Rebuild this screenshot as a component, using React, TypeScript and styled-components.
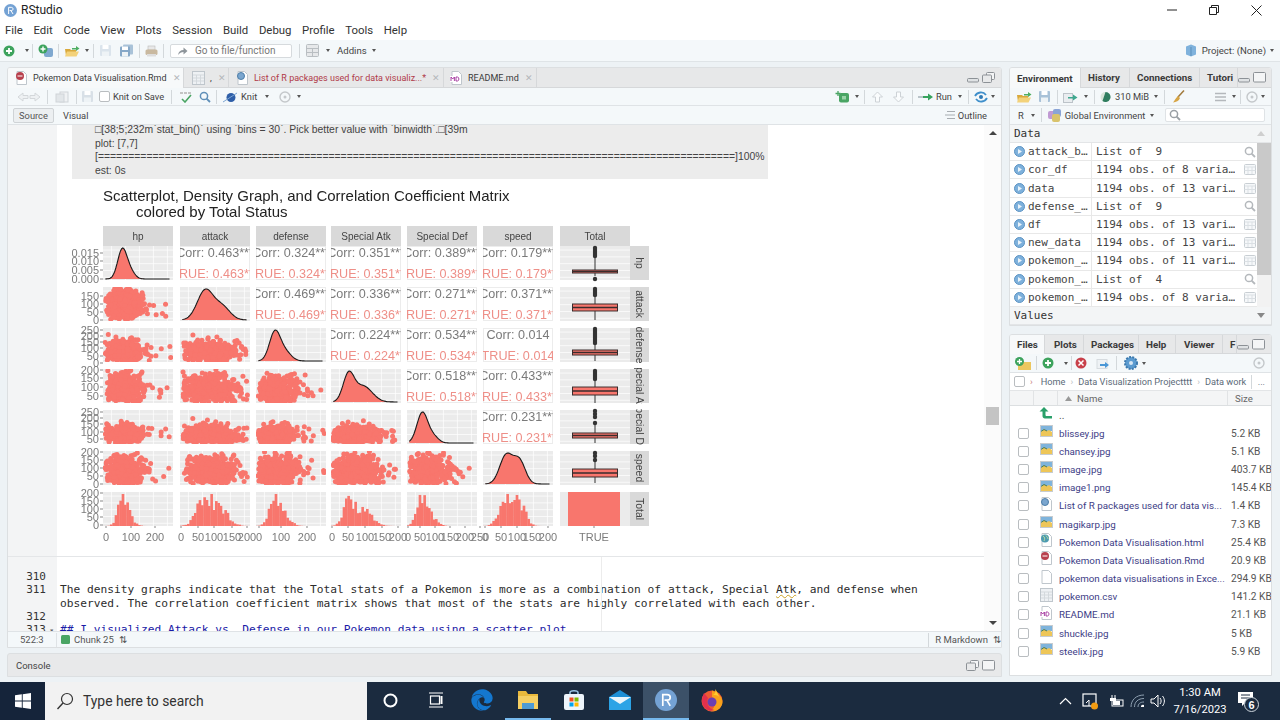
import React from 'react';
import styled, { createGlobalStyle } from 'styled-components';
import { FaEdge } from 'react-icons/fa';

const UI = `Roboto, "Open Sans", sans-serif`;
const MONO = `"DejaVu Sans Mono", "Liberation Mono", monospace`;
const ARIAL = `"Liberation Sans", Arial, sans-serif`;

const GlobalStyle = createGlobalStyle`
  html, body { margin: 0; padding: 0; background: #fff; }
  body { width: 1280px; height: 720px; overflow: hidden; font-family: ${UI}; }
`;

const Win = styled.div`
  width: 1280px;
  height: 720px;
  display: flex;
  flex-direction: column;
  overflow: hidden;
`;

const TitleBar = styled.div`
  height: 20px;
  display: flex;
  align-items: center;
  padding-left: 4px;
  background: #fff;
  font-size: 12px;
  color: #222;
`;
const TitleText = styled.span`
  margin-left: 4px;
`;
const WinControls = styled.div`
  margin-left: auto;
  display: flex;
  align-items: center;
  gap: 32px;
  padding-right: 18px;
`;

const MenuBar = styled.div`
  height: 20px;
  display: flex;
  align-items: center;
  gap: 10.6px;
  padding-left: 5px;
  background: #fff;
  font-size: 11.4px;
  color: #333;
`;

const MainToolbar = styled.div`
  height: 21px;
  display: flex;
  align-items: center;
  padding: 0 6px 0 3px;
  background: #f4f8fa;
  border-bottom: 1px solid #dfe4e7;
  font-size: 9.6px;
  color: #444;
`;

const Slot = styled.span<{ $ml?: number; $pushRight?: boolean }>`
  display: inline-flex;
  align-items: center;
  flex: none;
  margin-left: ${(p) => (p.$pushRight ? 'auto' : `${p.$ml ?? 0}px`)};
`;

const Sep = styled.span<{ $ml: number }>`
  width: 1px;
  height: 14px;
  flex: none;
  margin-left: ${(p) => p.$ml}px;
  background: #d3d8db;
`;

const Caret = styled.span<{ $ml: number }>`
  width: 0;
  height: 0;
  flex: none;
  margin-left: ${(p) => p.$ml}px;
  border-left: 2.5px solid transparent;
  border-right: 2.5px solid transparent;
  border-top: 3px solid #555;
`;

const GoToBox = styled.div`
  width: 122px;
  height: 14px;
  margin-left: 6px;
  display: flex;
  align-items: center;
  gap: 7px;
  padding-left: 6px;
  box-sizing: border-box;
  background: #fff;
  border: 1px solid #d6dadd;
  border-radius: 2px;
  color: #777;
  font-size: 10px;
`;

const Workspace = styled.div`
  height: 620px;
  box-sizing: border-box;
  padding: 5px 8px 5px 7px;
  display: grid;
  grid-template-columns: 995px 263px;
  column-gap: 7px;
  background: #edf2f5;
`;

const Column = styled.div<{ $gap: number }>`
  display: flex;
  flex-direction: column;
  gap: ${(p) => p.$gap}px;
  min-height: 0;
`;

const Pane = styled.div<{ $h: number }>`
  height: ${(p) => p.$h}px;
  flex: none;
  display: flex;
  flex-direction: column;
  box-sizing: border-box;
  overflow: hidden;
  background: #fff;
  border: 1px solid #dcdfe1;
  border-radius: 3px 3px 0 0;
`;

const TabStrip = styled.div<{ $h?: number }>`
  height: ${(p) => p.$h ?? 19}px;
  flex: none;
  display: flex;
  align-items: stretch;
  background: #e7e8e9;
  border-bottom: 1px solid #d6d8da;
`;

const Tab = styled.div<{ $w: number; $active?: boolean; $red?: boolean; $bold?: boolean; $pl?: number }>`
  width: ${(p) => p.$w}px;
  flex: none;
  box-sizing: border-box;
  display: flex;
  align-items: center;
  padding-left: ${(p) => p.$pl ?? 7}px;
  gap: 5px;
  white-space: nowrap;
  overflow: hidden;
  font-size: ${(p) => (p.$bold ? 9.8 : 9)}px;
  font-weight: ${(p) => (p.$bold ? 700 : 400)};
  color: ${(p) => (p.$red ? '#b03a48' : '#3a3a3a')};
  background: ${(p) => (p.$active ? '#f7f9fa' : 'transparent')};
  border-right: 1px solid #d6d8da;
  margin-bottom: ${(p) => (p.$active ? '-1px' : '0')};
`;

const TabClose = styled.span`
  color: #b4b7ba;
  font-size: 9px;
  margin-left: 1px;
`;

const PaneControls = styled.div`
  margin-left: auto;
  display: flex;
  align-items: center;
  padding-right: 6px;
  gap: 3px;
`;

const ToolRow = styled.div<{ $h: number; $pl?: number }>`
  height: ${(p) => p.$h}px;
  flex: none;
  box-sizing: border-box;
  display: flex;
  align-items: center;
  padding: 0 6px 0 ${(p) => p.$pl ?? 0}px;
  background: #f4f8fa;
  border-bottom: 1px solid #dfe3e6;
  font-size: 9.3px;
  color: #444;
  white-space: nowrap;
`;

const CheckBox = styled.span<{ $ml?: number; $size?: number }>`
  width: ${(p) => p.$size ?? 9}px;
  height: ${(p) => p.$size ?? 9}px;
  flex: none;
  margin-left: ${(p) => p.$ml ?? 0}px;
  background: #fff;
  border: 1px solid #b9bdc0;
  border-radius: 2px;
`;

const SourceButton = styled.div`
  width: 39px;
  height: 13px;
  margin-left: 5px;
  display: flex;
  align-items: center;
  justify-content: center;
  background: #eceff1;
  border: 1px solid #cfd3d6;
  border-radius: 2px;
  font-size: 9.3px;
  color: #555;
`;

const EditorBody = styled.div`
  flex: 1;
  min-height: 0;
  display: flex;
  overflow: hidden;
  background: #fff;
`;

const EditorMain = styled.div`
  flex: 1;
  min-width: 0;
  display: flex;
  flex-direction: column;
`;

const OutputRow = styled.div`
  height: 432px;
  flex: none;
  display: grid;
  grid-template-columns: 49px 1fr;
  border-bottom: 1px solid #e4e6e8;
  box-sizing: border-box;
`;

const Gutter = styled.div`
  background: #f3f4f5;
  box-sizing: border-box;
  padding-right: 11px;
  text-align: right;
  font-family: ${MONO};
  font-size: 11px;
  line-height: 13.3px;
  color: #333;
`;

const FoldMark = styled.span`
  display: inline-block;
  width: 7px;
  margin-right: -8px;
  margin-left: 1px;
  font-size: 8px;
  color: #666;
`;

const OutputBody = styled.div`
  display: flex;
  flex-direction: column;
  padding-left: 15px;
  overflow: hidden;
`;

const ChunkLog = styled.div`
  width: 696px;
  height: 56px;
  flex: none;
  margin-top: -2px;
  box-sizing: border-box;
  padding-left: 23px;
  background: #ececec;
  font-family: ${ARIAL};
  font-size: 10.4px;
  line-height: 13.6px;
  color: #444;
  white-space: nowrap;
  overflow: hidden;
`;

const CodeArea = styled.div`
  position: relative;
  flex: 1;
  min-height: 0;
  overflow: hidden;
  &::after {
    content: '';
    position: absolute;
    top: 0;
    bottom: 0;
    left: 593px;
    width: 1px;
    background: #ececec;
  }
`;

const CodeRow = styled.div<{ $h: number }>`
  height: ${(p) => p.$h}px;
  display: grid;
  grid-template-columns: 49px 1fr;
`;

const CodeText = styled.div<{ $blue?: boolean }>`
  padding-left: 3px;
  font-family: ${MONO};
  font-size: 11.23px;
  line-height: 13.3px;
  white-space: pre;
  color: ${(p) => (p.$blue ? '#1a1aa6' : '#2c2c2c')};
`;

const Squiggle = styled.span`
  text-decoration: underline wavy #c9a227 1px;
`;

const VScroll = styled.div`
  width: 17px;
  flex: none;
  display: flex;
  flex-direction: column;
  align-items: center;
  background: #fbfbfb;
  padding: 6px 0;
  box-sizing: border-box;
`;

const ArrowUp = styled.span`
  border-left: 4px solid transparent;
  border-right: 4px solid transparent;
  border-bottom: 4px solid #444;
`;

const ArrowDown = styled.span`
  margin-top: auto;
  border-left: 4px solid transparent;
  border-right: 4px solid transparent;
  border-top: 4px solid #444;
`;

const ScrollThumb = styled.div`
  width: 13px;
  height: 18px;
  margin-top: 272px;
  background: #c4c4c4;
`;

const StatusBar = styled.div`
  height: 15px;
  flex: none;
  display: flex;
  align-items: center;
  background: #f4f8fa;
  border-top: 1px solid #dfe3e6;
  font-size: 9.5px;
  color: #555;
  white-space: nowrap;
`;

const StatusCell = styled.span<{ $w: number }>`
  width: ${(p) => p.$w}px;
  flex: none;
  box-sizing: border-box;
  padding-left: 12px;
  border-right: 1px solid #dfe3e6;
  line-height: 14px;
`;

const ConsoleBar = styled.div`
  height: 24px;
  flex: none;
  box-sizing: border-box;
  display: flex;
  align-items: center;
  padding: 0 0 0 8px;
  background: #e8e9ea;
  border: 1px solid #dcdfe1;
  border-radius: 3px 3px 0 0;
  font-size: 9.5px;
  color: #444;
`;

const ListWrap = styled.div`
  flex: 1;
  min-height: 0;
  display: flex;
`;

const SectionHead = styled.div`
  height: 18px;
  flex: none;
  display: flex;
  align-items: center;
  justify-content: space-between;
  padding: 0 6px 0 4px;
  box-sizing: border-box;
  background: #f3f5f6;
  font-family: ${MONO};
  font-size: 11px;
  color: #333;
  border-bottom: 1px solid #e3e5e7;
`;

const EnvList = styled.div`
  flex: 1;
  min-width: 0;
  display: flex;
  flex-direction: column;
`;

const EnvRow = styled.div`
  flex: 1;
  display: grid;
  grid-template-columns: 82px 1fr 22px;
  align-items: center;
  font-family: ${MONO};
  font-size: 11px;
  color: #444;
  white-space: pre;
  border-bottom: 1px solid #e8e8e8;
`;

const EnvName = styled.div`
  height: 100%;
  display: flex;
  align-items: center;
  gap: 3px;
  padding-left: 4px;
  overflow: hidden;
  border-right: 1px solid #e8e8e8;
`;

const EnvValue = styled.div`
  padding-left: 4px;
  overflow: hidden;
`;

const EnvAction = styled.div`
  padding-left: 9px;
`;

const EnvScroll = styled.div`
  width: 14px;
  flex: none;
  background: #f2f2f2;
`;

const EnvThumb = styled.div`
  height: 132px;
  background: #c9c9c9;
`;

const SearchBox = styled.div`
  width: 102px;
  height: 14px;
  margin-left: 11px;
  display: flex;
  align-items: center;
  padding-left: 3px;
  box-sizing: border-box;
  background: #fff;
  border: 1px solid #dfe3e6;
  border-radius: 2px;
`;

const PathBar = styled.div`
  height: 18px;
  flex: none;
  display: flex;
  align-items: center;
  box-sizing: border-box;
  padding-left: 4px;
  font-size: 9.2px;
  color: #5b6a78;
  white-space: nowrap;
  border-bottom: 1px solid #e3e5e7;
`;

const PathChevron = styled.span<{ $red?: boolean }>`
  margin: 0 5px;
  color: ${(p) => (p.$red ? '#c77b7b' : '#b9bdc0')};
`;

const FileHead = styled.div`
  height: 15px;
  flex: none;
  box-sizing: border-box;
  display: grid;
  grid-template-columns: 24px 24px 170px 1fr;
  background: #f4f5f6;
  font-size: 9.6px;
  color: #666;
  border-bottom: 1px solid #dcdfe1;
`;

const HeadCell = styled.div`
  display: flex;
  align-items: center;
  gap: 5px;
  padding-left: 7px;
  border-right: 1px solid #e1e3e5;
  &:last-child {
    border-right: 0;
  }
`;

const FileRow = styled.div`
  height: 18.2px;
  display: grid;
  grid-template-columns: 24px 24px 170px 1fr;
  align-items: center;
  font-size: 9.8px;
  white-space: nowrap;
`;

const FileCheck = styled.div`
  display: flex;
  justify-content: center;
  padding-left: 2px;
`;

const FileIconCell = styled.div`
  display: flex;
  justify-content: center;
  padding-bottom: 4px;
`;

const FileName = styled.div<{ $muted?: boolean }>`
  padding-left: 1px;
  overflow: hidden;
  color: ${(p) => (p.$muted ? '#555' : '#3d3d86')};
`;

const FileSize = styled.div`
  padding-left: 3px;
  font-size: 10.2px;
  color: #555;
`;

const UpRow = styled.div`
  height: 18px;
  display: grid;
  grid-template-columns: 24px 24px 1fr;
  align-items: center;
  font-size: 10.2px;
  color: #555;
`;

const Taskbar = styled.div`
  height: 38px;
  flex: none;
  display: flex;
  align-items: stretch;
  background: #1b2b3f;
  color: #fff;
`;

const StartButton = styled.div`
  width: 45px;
  display: flex;
  align-items: center;
  justify-content: center;
  background: #15243a;
`;

const SearchField = styled.div`
  width: 322px;
  display: flex;
  align-items: center;
  gap: 9px;
  padding-left: 11px;
  box-sizing: border-box;
  background: #f2f2f2;
  color: #333;
  font-size: 13.9px;
`;

const TaskIcon = styled.div<{ $w: number; $active?: boolean; $open?: boolean }>`
  width: ${(p) => p.$w}px;
  flex: none;
  box-sizing: border-box;
  display: flex;
  align-items: center;
  justify-content: center;
  background: ${(p) => (p.$active ? '#3c5168' : 'transparent')};
  border-bottom: 2px solid ${(p) => (p.$active || p.$open ? '#76b9ed' : 'transparent')};
`;

const Tray = styled.div`
  margin-left: auto;
  display: flex;
  align-items: center;
  padding-right: 21px;
`;

const Clock = styled.div`
  margin-left: 5px;
  width: 58px;
  text-align: center;
  font-size: 11.2px;
  line-height: 17px;
`;

const PlotSvg = styled.svg`
  display: block;
  flex: none;
  margin-top: 6px;
  filter: blur(0.35px);
`;

const Svg = ({ w, h, children }: { w: number; h: number; children: React.ReactNode }) => (
  <svg width={w} height={h} viewBox={`0 0 ${w} ${h}`} style={{ display: 'block', flexShrink: 0 }}>
    {children}
  </svg>
);

const RLogo = ({ s = 13 }: { s?: number }) => (
  <svg width={s} height={s} viewBox="0 0 13 13" style={{ display: 'block', flexShrink: 0 }}>
    <circle cx="6.5" cy="6.5" r="6.5" fill="#74a2d4" />
    <path d="M4.6 10V3.3h2.6c1.2 0 1.8.7 1.8 1.7S8.3 6.6 7.2 6.6H5.6M7 6.6 9 10" stroke="#fff" strokeWidth="1" fill="none" />
  </svg>
);

const PlusIcon = () => (
  <Svg w={12} h={12}>
    <circle cx="6" cy="6" r="5.5" fill="#3da35d" />
    <path d="M6 3v6M3 6h6" stroke="#fff" strokeWidth="1.8" />
  </Svg>
);

const ProjectIcon = () => (
  <Svg w={16} h={14}>
    <rect x="6" y="4" width="9" height="9" rx="2" fill="#7fa8cf" />
    <circle cx="5" cy="5" r="4.5" fill="#3da35d" />
    <path d="M5 2.5v5M2.5 5h5" stroke="#fff" strokeWidth="1.4" />
  </Svg>
);

const OpenFolder = () => (
  <Svg w={16} h={12}>
    <path d="M1 4h5l1 1h5v6H2z" fill="#d9a93c" />
    <path d="M3 6.5h12L12.5 11.5H1z" fill="#f3d27a" />
    <path d="M8 3h4V1l3.5 2.6L12 6V4.5H8z" fill="#4fae62" />
  </Svg>
);

const Floppy = ({ c = '#a9c2d8' }: { c?: string }) => (
  <Svg w={13} h={13}>
    <rect x="1" y="1" width="11" height="11" rx="1" fill={c} />
    <rect x="3.5" y="1" width="6" height="4" fill="#fff" />
    <rect x="3" y="7.5" width="7" height="4.5" fill="#eef3f6" />
  </Svg>
);

const FloppyAll = () => (
  <Svg w={15} h={13}>
    <rect x="4" y="0.5" width="10" height="10" rx="1" fill="#a9c2d8" />
    <rect x="1" y="2.5" width="10" height="10" rx="1" fill="#86a8c8" />
    <rect x="3" y="2.5" width="6" height="3.5" fill="#fff" />
    <rect x="3" y="8" width="6" height="4.5" fill="#eef3f6" />
  </Svg>
);

const Printer = () => (
  <Svg w={13} h={12}>
    <rect x="3" y="1" width="7" height="4" fill="#e8e8e8" stroke="#bbb" strokeWidth=".6" />
    <rect x="0.5" y="4.5" width="12" height="5.5" rx="1.5" fill="#c9b9a0" />
    <rect x="2" y="9" width="9" height="2.5" fill="#ddd" />
  </Svg>
);

const GoArrow = ({ c = '#8e959b' }: { c?: string }) => (
  <Svg w={11} h={10}>
    <path d="M1 9c.6-3.4 2.6-5 5.500-5V1.500L10.500 5 6.500 8.500V6C4.300 6 2.500 7 1 9z" fill={c} />
  </Svg>
);

const NavArrow = ({ right }: { right?: boolean }) => (
  <Svg w={12} h={10}>
    <path
      d={right ? 'M1 3.500h5V1l5 4-5 4V6.500H1z' : 'M11 3.500H6V1L1 5l5 4V6.500h5z'}
      fill="#eef1f3"
      stroke="#d3d7da"
    />
  </Svg>
);

const PagesIcon = () => (
  <Svg w={14} h={12}>
    <rect x="5" y="1" width="8" height="10" fill="#f0f2f4" stroke="#cfd4d8" />
    <rect x="1" y="3" width="8" height="8" fill="#e2e6e9" stroke="#cfd4d8" />
  </Svg>
);

const GridIcon = () => (
  <Svg w={13} h={13}>
    <rect x=".5" y=".5" width="12" height="12" rx="1" fill="#e6e8ea" stroke="#b9bec2" />
    <path d="M1 4.500h11M6.500 4.500v8M1 8.500h11" stroke="#b9bec2" />
  </Svg>
);

const CubeIcon = () => (
  <Svg w={12} h={13}>
    <path d="M1 2.500 6 .5l5 2v8l-5 2-5-2z" fill="#7fb2dc" />
    <path d="M6 3v9" stroke="#5b8fbb" />
  </Svg>
);

const CloseGlyph = () => (
  <Svg w={11} h={11}>
    <path d="M.5.5l10 10M10.500.5l-10 10" stroke="#222" strokeWidth="1" />
  </Svg>
);

const RestoreGlyph = () => (
  <Svg w={10} h={10}>
    <path d="M2.500 2.500V.5h7v7h-2M.5 2.500h7v7h-7z" stroke="#222" fill="none" />
  </Svg>
);

const MinGlyph = () => (
  <Svg w={10} h={2}>
    <path d="M0 1h10" stroke="#222" />
  </Svg>
);

const MinBtn = () => (
  <Svg w={12} h={11}>
    <rect x=".5" y="6.500" width="11" height="3.500" rx="1" fill="#dfe2e4" stroke="#8c9196" />
  </Svg>
);

const MaxBtn = () => (
  <Svg w={13} h={11}>
    <rect x=".5" y=".5" width="12" height="9.500" rx="1" fill="#f4f5f6" stroke="#8c9196" />
  </Svg>
);

const RestoreBtn = () => (
  <Svg w={13} h={11}>
    <rect x="4.500" y=".5" width="8" height="7" rx="1" fill="#f4f5f6" stroke="#8c9196" />
    <rect x=".5" y="3" width="9" height="7.500" rx="1" fill="#e8e9ea" stroke="#8c9196" />
  </Svg>
);

const DocIcon = ({ mark }: { mark?: 'r' | 'rmd' | 'md' | 'html' }) => (
  <Svg w={13} h={14}>
    <path d="M2 .5h6.500l3 3v10H2z" fill="#fff" stroke="#bfc6cc" />
    {mark === 'r' && <circle cx="5" cy="5" r="3.500" fill="#7aa6cf" stroke="#4d7da8" />}
    {mark === 'rmd' && <circle cx="5" cy="5" r="4" fill="#b8404d" />}
    {mark === 'rmd' && <path d="M2.500 5h5" stroke="#fff" />}
    {mark === 'html' && <circle cx="5" cy="5.500" r="4" fill="#4d9bb0" />}
    {mark === 'html' && <path d="M3 3c2 1 2 3 1 5M6 2.500c1 2 2 2 2 3.500" stroke="#b8dba0" fill="none" />}
    {mark === 'md' && <rect x="0" y="5" width="10" height="6" fill="#fff" />}
    {mark === 'md' && <path d="M1 10V6l1.700 2L4.400 6v4M6 6v4h1.400c2 0 2-4 0-4z" stroke="#a02f9b" fill="none" strokeWidth=".9" />}
  </Svg>
);

const ImageIcon = () => (
  <Svg w={13} h={12}>
    <rect x=".5" y=".5" width="12" height="11" fill="#fff" stroke="#c7ccd0" />
    <rect x="1" y="1" width="11" height="5" fill="#7fb4dc" />
    <path d="M1 7l3-2.500L7 6l2-1 3 2v4H1z" fill="#eec658" />
    <path d="M1 6.500l3-2 3 1.500" stroke="#4f7d52" fill="none" />
  </Svg>
);

const CsvIcon = () => (
  <Svg w={13} h={14}>
    <rect x=".5" y=".5" width="12" height="13" fill="#eef1f4" stroke="#bfc6cc" />
    <path d="M1 4h11M1 7h11M1 10h11M4.500 4v9M8.500 4v9" stroke="#d4d9dd" />
  </Svg>
);

const UpArrowIcon = () => (
  <Svg w={14} h={12}>
    <path d="M5 0 .5 4.500h3V9c0 1.500 1 2.500 2.500 2.500H13V9H7.500c-.5 0-1-.3-1-1V4.500h3z" fill="#2aa06a" />
  </Svg>
);

const PlayDot = () => (
  <Svg w={11} h={11}>
    <circle cx="5.500" cy="5.500" r="5" fill="#7eb1dc" stroke="#5b92c2" />
    <path d="M4 3l4 2.500L4 8z" fill="#eaf3fa" />
  </Svg>
);

const Magnifier = ({ c = '#a9adb1' }: { c?: string }) => (
  <Svg w={12} h={12}>
    <circle cx="5" cy="5" r="3.600" fill="none" stroke={c} strokeWidth="1.500" />
    <path d="M7.600 7.600 11 11" stroke={c} strokeWidth="1.800" />
  </Svg>
);

const TableIcon = () => (
  <Svg w={12} h={11}>
    <rect x=".5" y=".5" width="11" height="10" rx="1" fill="#f6f8fa" stroke="#c8ced3" />
    <path d="M.5 3h11M4 3v7M8 3v7M.5 6.500h11" stroke="#dbe0e4" />
  </Svg>
);

const KnitIcon = () => (
  <Svg w={16} h={12}>
    <circle cx="9" cy="6.500" r="4.500" fill="#2f5fa8" />
    <path d="M1 11 15 2" stroke="#7ea6d2" />
  </Svg>
);

const Abc = () => (
  <Svg w={14} h={13}>
    <path d="M1 3h11" stroke="#c4c4c4" strokeWidth="2" strokeDasharray="3 1" />
    <path d="M3 9l3 3 6-7" stroke="#4aa564" strokeWidth="1.600" fill="none" />
  </Svg>
);

const GearDim = () => (
  <Svg w={12} h={12}>
    <circle cx="6" cy="6" r="5" fill="none" stroke="#c4c8cb" strokeWidth="1.400" />
    <circle cx="6" cy="6" r="1.500" fill="#c4c8cb" />
  </Svg>
);

const GearBlue = () => (
  <Svg w={14} h={14}>
    <circle cx="7" cy="7" r="6" fill="#5b9bd0" stroke="#3c79ad" strokeDasharray="2 1.200" strokeWidth="2" />
    <circle cx="7" cy="7" r="2" fill="#d7e7f4" />
  </Svg>
);

const ChunkAdd = () => (
  <Svg w={15} h={12}>
    <rect x="4" y="2" width="10" height="9.500" rx="2" fill="#4aa564" />
    <rect x="7" y="5" width="4" height="3.500" fill="#9ad3a8" />
    <path d="M3 0v5M.5 2.500h5" stroke="#4aa564" strokeWidth="1.300" />
  </Svg>
);

const ArrowGhost = ({ down }: { down?: boolean }) => (
  <Svg w={11} h={12}>
    <path
      d={down ? 'M3.500 1h4v5h3L5.500 11 .5 6h3z' : 'M3.500 11h4V6h3L5.500 1 .5 6h3z'}
      fill="#fafcfd"
      stroke="#cdd2d6"
    />
  </Svg>
);

const RunArrow = () => (
  <Svg w={16} h={10}>
    <path d="M0 5h5" stroke="#b9c3c9" strokeWidth="2" />
    <path d="M5 4h5V1.500L15 5l-5 3.500V6H5z" fill="#37a35e" />
  </Svg>
);

const SyncIcon = () => (
  <Svg w={14} h={12}>
    <path d="M1 5C3 1 9 0 12 4M13 7c-2 4-8 5-11 1" stroke="#3f8fcb" strokeWidth="1.800" fill="none" />
    <circle cx="7" cy="6" r="2" fill="#2f7ab5" />
  </Svg>
);

const OutlineIcon = () => (
  <Svg w={11} h={10}>
    <path d="M2 1.500h8M0 5h10M2 8.500h8" stroke="#a8adb1" strokeWidth="1.100" />
  </Svg>
);

const PieIcon = () => (
  <Svg w={11} h={12}>
    <circle cx="5.500" cy="6" r="5" fill="#d7e4d9" />
    <path d="M5.500 1a5 5 0 1 1-3 9z" fill="#2f7d5f" />
  </Svg>
);

const Broom = () => (
  <Svg w={13} h={13}>
    <path d="M12 .5 6 7" stroke="#a17a3b" strokeWidth="1.500" />
    <path d="M6 6l2 2c-1 3-4 4-7 4.500C2.500 11 3 9 6 6z" fill="#d7a545" />
  </Svg>
);

const ListLines = () => (
  <Svg w={11} h={10}>
    <path d="M0 1.500h11M0 5h11M0 8.500h11" stroke="#b4b8bc" strokeWidth="1.400" />
  </Svg>
);

const ImportIcon = () => (
  <Svg w={15} h={12}>
    <rect x=".5" y="2.500" width="9" height="9" fill="#e9edf0" stroke="#bcc3c9" />
    <path d="M5 6h5V3.500L14.500 6.500 10 9.500V7.500H5z" fill="#3ea88f" />
  </Svg>
);

const EnvCube = () => (
  <Svg w={13} h={13}>
    <rect x="0" y="2" width="8" height="8" rx="2" fill="#c09ad3" />
    <rect x="5" y="0" width="8" height="8" rx="2" fill="#8aa4d6" />
    <rect x="4" y="5" width="8" height="8" rx="2" fill="#d9c36c" />
  </Svg>
);

const FolderPlus = () => (
  <Svg w={17} h={13}>
    <path d="M3 4h5l1 1h7v8H3z" fill="#ecc75e" />
    <circle cx="4.500" cy="4.500" r="4.500" fill="#3da35d" />
    <path d="M4.500 2v5M2 4.500h5" stroke="#fff" strokeWidth="1.300" />
  </Svg>
);

const RedX = () => (
  <Svg w={12} h={12}>
    <circle cx="6" cy="6" r="5.500" fill="#c8404a" />
    <path d="M3.500 3.500l5 5M8.500 3.500l-5 5" stroke="#fff" strokeWidth="1.500" />
  </Svg>
);

const RenameIcon = () => (
  <Svg w={15} h={12}>
    <rect x="1" y="2.500" width="10" height="9" fill="#eef2f5" stroke="#d6dbdf" />
    <path d="M4 7h5V5l4 3-4 3V9H4z" fill="#4a97d6" />
  </Svg>
);

const WinLogo = () => (
  <Svg w={16} h={16}>
    <path d="M0 2.300 6.800 1.300v6.300H0zM7.700 1.200 16 0v7.600H7.700zM0 8.400h6.800v6.300L0 13.700zM7.700 8.400H16V16l-8.300-1.200z" fill="#fff" />
  </Svg>
);

const SearchGlyph = () => (
  <Svg w={18} h={18}>
    <circle cx="11" cy="7" r="5.500" fill="none" stroke="#333" strokeWidth="1.200" />
    <path d="M7 11 1.500 17" stroke="#333" strokeWidth="1.400" />
  </Svg>
);

const TaskView = () => (
  <Svg w={16} h={16}>
    <path d="M1 1h14M1 15h14" stroke="#fff" strokeWidth="1.200" />
    <rect x="2.500" y="4" width="9" height="8" fill="none" stroke="#fff" strokeWidth="1.200" />
    <path d="M13.500 4v8" stroke="#fff" strokeWidth="2" />
  </Svg>
);

const ExplorerIcon = () => (
  <Svg w={22} h={20}>
    <path d="M1 1h8l2 3h10v15H1z" fill="#e9b93c" />
    <rect x="1" y="6" width="20" height="13" fill="#f5cf63" />
    <rect x="5" y="13" width="12" height="6" fill="#4d9bd5" />
  </Svg>
);

const StoreIcon = () => (
  <Svg w={22} h={22}>
    <path d="M7 6V3.500C7 1 15 1 15 3.500V6" stroke="#9cc6e6" strokeWidth="1.500" fill="none" />
    <rect x="1" y="5" width="20" height="16" rx="2" fill="#eef5fb" />
    <rect x="6.500" y="8.500" width="4" height="4" fill="#f25022" />
    <rect x="11.500" y="8.500" width="4" height="4" fill="#7fba00" />
    <rect x="6.500" y="13.500" width="4" height="4" fill="#00a4ef" />
    <rect x="11.500" y="13.500" width="4" height="4" fill="#ffb900" />
  </Svg>
);

const MailIcon = () => (
  <Svg w={22} h={20}>
    <path d="M0 7 11 0l11 7v13H0z" fill="#1d8fd6" />
    <path d="M0 7h22v13H0z" fill="#2ba3e6" />
    <path d="M0 7l11 7 11-7" fill="#e9f5fc" />
  </Svg>
);

const FirefoxIcon = () => (
  <Svg w={22} h={24}>
    <circle cx="11" cy="13" r="10.500" fill="#ee5a34" />
    <path d="M11 2.500C17 5 22 9 21.500 15 20 22 14 24 9 23 16 20 14 11 11 9z" fill="#f9a11b" />
    <path d="M3 5c-2 4-2.500 8-1.500 11 2 6 8 8 12 6C7 21 5 14 7 10z" fill="#e3304d" />
    <circle cx="11" cy="14" r="4.500" fill="#6b3fb3" />
    <path d="M14 1c1 3 0 5-2 6 2 0 5 0 6 2-1-3-2-6-4-8z" fill="#ffcb2e" />
  </Svg>
);

const TrayCaret = () => (
  <Svg w={13} h={8}>
    <path d="M1 7l5.500-5.500L12 7" stroke="#fff" fill="none" strokeWidth="1.200" />
  </Svg>
);

const TrayMonitor = () => (
  <Svg w={17} h={17}>
    <rect x="1" y="1" width="13" height="12" fill="none" stroke="#fff" strokeWidth="1.200" />
    <path d="M4 10l3-3v6" stroke="#fff" fill="none" />
    <circle cx="12.500" cy="13" r="3.500" fill="#f39c12" />
  </Svg>
);

const TrayBattery = () => (
  <Svg w={15} h={12}>
    <path d="M3 0v3M6 0v3" stroke="#fff" />
    <path d="M1 3h6v3H1z" fill="#fff" />
    <rect x="3" y="5" width="11" height="6" fill="none" stroke="#fff" />
    <rect x="4" y="6" width="7" height="4" fill="#fff" />
  </Svg>
);

const TrayWifi = () => (
  <Svg w={15} h={14}>
    <path d="M1 13C1 6 6 1 14 1M4.500 13C4.500 8 8 4.500 14 4.500M8 13c0-3 2-5 6-5" stroke="#8ea0b1" fill="none" />
    <path d="M11 13a2 2 0 0 1 3-2v2z" fill="#fff" />
  </Svg>
);

const TraySound = () => (
  <Svg w={16} h={14}>
    <path d="M1 5h3l4-4v12L4 9H1z" fill="none" stroke="#fff" />
    <path d="M10 4c1.500 2 1.500 4 0 6M12.500 2c2.500 3 2.500 7 0 10" stroke="#fff" fill="none" />
  </Svg>
);

const TrayNotify = () => (
  <Svg w={22} h={22}>
    <path d="M1 2h15v11H8l-3 3v-3H1z" fill="#fff" />
    <path d="M4 5h9M4 8h9" stroke="#1b2b3f" />
    <circle cx="14.500" cy="14.500" r="7" fill="#1b2b3f" stroke="#cdd5dc" />
    <text x="14.500" y="18.500" fill="#fff" fontSize="11" fontWeight="700" textAnchor="middle" fontFamily={ARIAL}>6</text>
  </Svg>
);

// ---- ggpairs picture ----

const RED = '#F8766D';
const COL_X = [103, 180, 256, 331, 407, 483, 560];
const COL_W = 70;
const ROW_Y = [246, 287, 328, 369, 410, 451, 492];
const ROW_H = 34;
const NAMES = ['hp', 'attack', 'defense', 'Special Atk', 'Special Def', 'speed', 'Total'];

const rng = (seed: number) => () => {
  seed |= 0;
  seed = (seed + 0x6d2b79f5) | 0;
  let t = Math.imul(seed ^ (seed >>> 15), 1 | seed);
  t = (t + Math.imul(t ^ (t >>> 7), 61 | t)) ^ t;
  return ((t ^ (t >>> 14)) >>> 0) / 4294967296;
};

const XSTAT = [[0.3, 0.12], [0.42, 0.2], [0.3, 0.14], [0.34, 0.2], [0.3, 0.14], [0.34, 0.17]];
const YSTAT = [[0, 0], [0.45, 0.23], [0.28, 0.17], [0.38, 0.24], [0.26, 0.15], [0.4, 0.22]];

const MIX: number[][][] = [
  [[1, 0.27, 0.09], [0.35, 0.37, 0.1]],
  [[1, 0.36, 0.16], [0.45, 0.6, 0.16]],
  [[1, 0.27, 0.11], [0.3, 0.42, 0.12]],
  [[1, 0.25, 0.11], [0.6, 0.46, 0.18]],
  [[1, 0.22, 0.11], [0.2, 0.38, 0.1]],
  [[1, 0.33, 0.13], [0.8, 0.52, 0.12]],
];

const dens = (i: number, f: number) =>
  MIX[i].reduce((s, [a, m, sd]) => s + a * Math.exp(-(((f - m) / sd) ** 2)), 0);

const gauss = (r: () => number) => Math.sqrt(-2 * Math.log(r() + 1e-6)) * Math.cos(2 * Math.PI * r());

const PanelBg = ({ r, c }: { r: number; c: number }) => {
  const x = COL_X[c];
  const y = ROW_Y[r];
  return (
    <g>
      <rect x={x} y={y} width={COL_W} height={ROW_H} fill="#ebebeb" />
      {[0.12, 0.32, 0.52, 0.72, 0.92].map((f) => (
        <line key={`v${f}`} x1={x + f * COL_W} x2={x + f * COL_W} y1={y} y2={y + ROW_H} stroke="#fff" strokeWidth=".7" />
      ))}
      {[0.12, 0.32, 0.52, 0.72, 0.92].map((f) => (
        <line key={`h${f}`} y1={y + f * ROW_H} y2={y + f * ROW_H} x1={x} x2={x + COL_W} stroke="#fff" strokeWidth=".7" />
      ))}
    </g>
  );
};

const Scatter = ({ r, c }: { r: number; c: number }) => {
  const rand = rng(r * 100 + c * 7 + 3);
  const x0 = COL_X[c];
  const y0 = ROW_Y[r];
  const pts: [number, number][] = [];
  for (let i = 0; i < 480; i++) {
    const fx = XSTAT[c][0] + gauss(rand) * XSTAT[c][1];
    const fy = YSTAT[r][0] + gauss(rand) * YSTAT[r][1];
    if (fx < 0.03 || fx > 0.97 || fy < 0.04 || fy > 0.98) continue;
    pts.push([fx, fy]);
  }
  for (let i = 0; i < 6; i++) pts.push([0.62 + rand() * 0.36, 0.05 + rand() * 0.45]);
  return (
    <g clipPath={`url(#p${r}-${c})`}>
      <PanelBg r={r} c={c} />
      {pts.map(([fx, fy], i) => (
        <circle key={i} cx={x0 + fx * COL_W} cy={y0 + ROW_H - fy * ROW_H} r="2.500" fill={RED} />
      ))}
    </g>
  );
};

const Density = ({ i }: { i: number }) => {
  const x0 = COL_X[i];
  const y0 = ROW_Y[i];
  let max = 0;
  for (let k = 0; k <= 60; k++) max = Math.max(max, dens(i, k / 60));
  const line: string[] = [];
  for (let k = 2; k <= 57; k++) {
    const f = k / 60;
    line.push(`${(x0 + f * COL_W).toFixed(1)},${(y0 + ROW_H - 1 - (dens(i, f) / max) * (ROW_H - 3)).toFixed(1)}`);
  }
  const baseY = y0 + ROW_H - 1;
  return (
    <g>
      <PanelBg r={i} c={i} />
      <polygon points={`${x0 + (2 / 60) * COL_W},${baseY} ${line.join(' ')} ${x0 + (57 / 60) * COL_W},${baseY}`} fill={RED} />
      <polyline points={line.join(' ')} fill="none" stroke="#1a1a1a" strokeWidth="1.100" />
    </g>
  );
};

const Hist = ({ c }: { c: number }) => {
  const rand = rng(c * 31 + 5);
  const x0 = COL_X[c];
  const y0 = ROW_Y[6];
  const n = 30;
  let max = 0;
  for (let k = 0; k <= 60; k++) max = Math.max(max, dens(c, k / 60));
  return (
    <g>
      <PanelBg r={6} c={c} />
      {Array.from({ length: n }, (_, k) => {
        const f = (k + 0.5) / n;
        const h = Math.min(1, (dens(c, f) / max) * (0.6 + rand() * 0.6)) * (ROW_H - 2);
        return (
          <rect key={k} x={x0 + (k / n) * COL_W} y={y0 + ROW_H - h} width={COL_W / n + 0.3} height={h} fill={RED} />
        );
      })}
    </g>
  );
};

const CORR: Record<string, string> = {
  '0-1': '0.463***', '0-2': '0.324***', '0-3': '0.351***', '0-4': '0.389***', '0-5': '0.179***',
  '1-2': '0.469***', '1-3': '0.336***', '1-4': '0.271***', '1-5': '0.371***',
  '2-3': '0.224***', '2-4': '0.534***', '2-5': '0.014',
  '3-4': '0.518***', '3-5': '0.433***',
  '4-5': '0.231***',
};

const CorrCell = ({ r, c }: { r: number; c: number }) => {
  const v = CORR[`${r}-${c}`];
  const x = COL_X[c];
  const y = ROW_Y[r];
  const cx = x + COL_W / 2;
  return (
    <g clipPath={`url(#p${r}-${c})`}>
      <rect x={x + 0.5} y={y + 0.5} width={COL_W - 1} height={ROW_H - 1} fill="#fff" stroke="#ececec" />
      <text x={cx} y={y + 11} fontSize="12.600" fill="#7a7a7a" textAnchor="middle" fontFamily={ARIAL}>{`Corr: ${v}`}</text>
      <text x={cx} y={y + 32} fontSize="12.600" fill="#ee8f88" textAnchor="middle" fontFamily={ARIAL}>{`TRUE: ${v}`}</text>
    </g>
  );
};

const BOXES = [
  { top: 270, bot: 273, wTop: 255, wBot: 276, out: [248, 250, 252, 254, 256, 279] },
  { top: 304, bot: 311, wTop: 296, wBot: 320, out: [289, 291, 293, 295] },
  { top: 350, bot: 355, wTop: 345, wBot: 361, out: [329, 331, 333, 335, 337, 339, 341, 343] },
  { top: 387, bot: 395, wTop: 380, wBot: 403, out: [371, 373, 375, 377, 379] },
  { top: 433, bot: 438, wTop: 425, wBot: 443, out: [411, 414, 417, 423] },
  { top: 469, bot: 477, wTop: 461, wBot: 483, out: [453, 456, 460] },
];

const BoxCell = ({ r }: { r: number }) => {
  const b = BOXES[r];
  return (
    <g>
      <rect x={560} y={ROW_Y[r]} width={COL_W} height={ROW_H} fill="#ebebeb" />
      {[0.12, 0.32, 0.52, 0.72, 0.92].map((f) => (
        <line key={f} x1={560} x2={630} y1={ROW_Y[r] + f * ROW_H} y2={ROW_Y[r] + f * ROW_H} stroke="#fff" strokeWidth=".7" />
      ))}
      <line x1={595} x2={595} y1={b.wTop} y2={b.wBot} stroke="#333" />
      {b.out.map((y) => (
        <circle key={y} cx={595} cy={y} r="2.200" fill="#333" />
      ))}
      <rect x={572.5} y={b.top} width={45} height={b.bot - b.top} fill={RED} stroke="#3a2c2c" />
      <line x1={572.5} x2={617.5} y1={(b.top + b.bot) / 2} y2={(b.top + b.bot) / 2} stroke="#3a2c2c" strokeWidth="1.300" />
    </g>
  );
};

const YTICKS: [string, number][][] = [
  [['0.015', 253], ['0.010', 261], ['0.005', 270], ['0.000', 279]],
  [['150', 296], ['100', 304], ['50', 312], ['0', 320]],
  [['250', 330], ['200', 336], ['150', 342], ['100', 348], ['50', 356], ['0', 363]],
  [['200', 370], ['150', 378], ['100', 387], ['50', 396]],
  [['250', 412], ['200', 418], ['150', 424], ['100', 432], ['50', 439]],
  [['200', 452], ['150', 460], ['100', 468], ['50', 476], ['0', 484]],
  [['200', 493], ['150', 501], ['100', 509], ['50', 517], ['0', 525]],
];

const XTICKS: [string, number][] = [
  ['0', 106], ['100', 131], ['200', 155],
  ['0', 181], ['50', 198], ['100', 214], ['150', 232], ['200', 247],
  ['0', 259], ['100', 281], ['200', 307],
  ['0', 332], ['50', 348], ['100', 365], ['150', 382], ['200', 398],
  ['0', 408], ['50', 420], ['100', 435], ['150', 450], ['200', 465], ['250', 480],
  ['0', 485], ['50', 501], ['100', 517], ['150', 532], ['200', 548],
  ['TRUE', 594],
];

const idx = [0, 1, 2, 3, 4, 5];

const PairsPlot = () => (
  <PlotSvg width={590} height={365} viewBox="72 185 590 365">
    <defs>
      {[0, 1, 2, 3, 4, 5, 6].map((r) =>
        idx.map((c) => (
          <clipPath id={`p${r}-${c}`} key={`${r}${c}`}>
            <rect x={COL_X[c]} y={ROW_Y[r]} width={COL_W} height={ROW_H} />
          </clipPath>
        )),
      )}
      {[0, 1, 2, 3, 4, 5, 6].map((r) => (
        <clipPath id={`s${r}`} key={r}>
          <rect x={630} y={ROW_Y[r] - 1} width={19} height={ROW_H + 2} />
        </clipPath>
      ))}
    </defs>
    <text x={103} y={201} fontSize="15" fill="#222" fontFamily={ARIAL}>
      Scatterplot, Density Graph, and Correlation Coefficient Matrix
    </text>
    <text x={136} y={217} fontSize="15" fill="#222" fontFamily={ARIAL}>
      colored by Total Status
    </text>

    {COL_X.map((x, c) => (
      <g key={c}>
        <rect x={x} y={226} width={COL_W} height={20} fill="#d9d9d9" />
        <text x={x + COL_W / 2} y={240} fontSize="10" fill="#444" textAnchor="middle" fontFamily={ARIAL}>
          {NAMES[c]}
        </text>
      </g>
    ))}
    {ROW_Y.map((y, r) => (
      <g key={r} clipPath={`url(#s${r})`}>
        <rect x={630} y={y} width={19} height={ROW_H} fill="#d9d9d9" />
        <text
          x={636}
          y={y + ROW_H / 2}
          fontSize="10.400"
          fill="#444"
          textAnchor="middle"
          fontFamily={ARIAL}
          transform={`rotate(90 636 ${y + ROW_H / 2})`}
        >
          {NAMES[r]}
        </text>
      </g>
    ))}

    {idx.map((r) =>
      idx.map((c) => {
        if (r === c) return <Density key={`${r}${c}`} i={r} />;
        if (r > c) return <Scatter key={`${r}${c}`} r={r} c={c} />;
        return <CorrCell key={`${r}${c}`} r={r} c={c} />;
      }),
    )}
    {idx.map((c) => (
      <Hist key={c} c={c} />
    ))}
    {idx.map((r) => (
      <BoxCell key={r} r={r} />
    ))}
    <rect x={560} y={492} width={COL_W} height={ROW_H} fill="#ebebeb" />
    <rect x={568} y={492} width={52} height={ROW_H} fill={RED} />

    {YTICKS.map((ticks, r) =>
      ticks.map(([label, y]) => (
        <g key={`${r}${label}`}>
          <text x={99} y={y + 4} fontSize="11" fill="#7b7b7b" textAnchor="end" fontFamily={ARIAL}>
            {label}
          </text>
          <line x1={100} x2={103} y1={y} y2={y} stroke="#555" strokeWidth=".7" />
        </g>
      )),
    )}
    {XTICKS.map(([label, x], i) => (
      <g key={i}>
        <text x={x} y={541} fontSize="11" fill="#7b7b7b" textAnchor="middle" fontFamily={ARIAL}>
          {label}
        </text>
        <line x1={x} x2={x} y1={526} y2={528} stroke="#555" strokeWidth=".7" />
      </g>
    ))}
  </PlotSvg>
);

// ---- data for the side panes ----

const ENV_ROWS: [string, string, boolean][] = [
  ['attack_b…', 'List of  9', true],
  ['cor_df', '1194 obs. of 8 varia…', false],
  ['data', '1194 obs. of 13 vari…', false],
  ['defense_…', 'List of  9', true],
  ['df', '1194 obs. of 13 vari…', false],
  ['new_data', '1194 obs. of 13 vari…', false],
  ['pokemon_…', '1194 obs. of 11 vari…', false],
  ['pokemon_…', 'List of  4', true],
  ['pokemon_…', '1194 obs. of 8 varia…', false],
];

const FILES: [string, string, React.ReactNode][] = [
  ['blissey.jpg', '5.2 KB', <ImageIcon />],
  ['chansey.jpg', '5.1 KB', <ImageIcon />],
  ['image.jpg', '403.7 KB', <ImageIcon />],
  ['image1.png', '145.4 KB', <ImageIcon />],
  ['List of R packages used for data vis...', '1.4 KB', <DocIcon mark="r" />],
  ['magikarp.jpg', '7.3 KB', <ImageIcon />],
  ['Pokemon Data Visualisation.html', '25.4 KB', <DocIcon mark="html" />],
  ['Pokemon Data Visualisation.Rmd', '20.9 KB', <DocIcon mark="rmd" />],
  ['pokemon data visualisations in Exce...', '294.9 KB', <DocIcon />],
  ['pokemon.csv', '141.2 KB', <CsvIcon />],
  ['README.md', '21.1 KB', <DocIcon mark="md" />],
  ['shuckle.jpg', '5 KB', <ImageIcon />],
  ['steelix.jpg', '5.9 KB', <ImageIcon />],
];

const MENU = ['File', 'Edit', 'Code', 'View', 'Plots', 'Session', 'Build', 'Debug', 'Profile', 'Tools', 'Help'];

export default function App() {
  return (
    <Win>
      <GlobalStyle />
      <TitleBar>
        <RLogo />
        <TitleText>RStudio</TitleText>
        <WinControls>
          <MinGlyph />
          <RestoreGlyph />
          <CloseGlyph />
        </WinControls>
      </TitleBar>
      <MenuBar>
        {MENU.map((m) => (
          <span key={m}>{m}</span>
        ))}
      </MenuBar>
      <MainToolbar>
        <PlusIcon />
        <Caret $ml={10} />
        <Sep $ml={3} />
        <Slot $ml={5}><ProjectIcon /></Slot>
        <Sep $ml={4} />
        <Slot $ml={5}><OpenFolder /></Slot>
        <Caret $ml={5} />
        <Sep $ml={4} />
        <Slot $ml={5}><Floppy c="#dbe4ec" /></Slot>
        <Slot $ml={7}><FloppyAll /></Slot>
        <Sep $ml={5} />
        <Slot $ml={5}><Printer /></Slot>
        <Sep $ml={5} />
        <GoToBox>
          <GoArrow />
          Go to file/function
        </GoToBox>
        <Sep $ml={7} />
        <Slot $ml={6}><GridIcon /></Slot>
        <Caret $ml={7} />
        <Slot $ml={7}>Addins</Slot>
        <Caret $ml={5} />
        <Slot $pushRight><CubeIcon /></Slot>
        <Slot $ml={5}>Project: (None)</Slot>
        <Caret $ml={4} />
      </MainToolbar>

      <Workspace>
        <Column $gap={5}>
          <Pane $h={581}>
            <TabStrip>
              <Tab $w={176} $active $pl={7}>
                <DocIcon mark="rmd" />
                Pokemon Data Visualisation.Rmd
                <TabClose>✕</TabClose>
              </Tab>
              <Tab $w={45} $pl={8}>
                <CsvIcon />
                ,<TabClose>✕</TabClose>
              </Tab>
              <Tab $w={215} $red $pl={7}>
                <DocIcon mark="r" />
                List of R packages used for data visualiz...*
                <TabClose>✕</TabClose>
              </Tab>
              <Tab $w={93} $pl={6}>
                <DocIcon mark="md" />
                README.md
                <TabClose>✕</TabClose>
              </Tab>
              <PaneControls>
                <MinBtn />
                <RestoreBtn />
              </PaneControls>
            </TabStrip>
            <ToolRow $h={18} $pl={9}>
              <Slot><NavArrow /></Slot>
              <Slot><NavArrow right /></Slot>
              <Sep $ml={6} />
              <Slot $ml={7}><PagesIcon /></Slot>
              <Sep $ml={7} />
              <Slot $ml={4}><Floppy c="#d8e0e7" /></Slot>
              <CheckBox $ml={5} />
              <Slot $ml={3}>Knit on Save</Slot>
              <Sep $ml={7} />
              <Slot $ml={7}><Abc /></Slot>
              <Slot $ml={6}><Magnifier c="#5f8fb8" /></Slot>
              <Sep $ml={5} />
              <Slot $ml={5}><KnitIcon /></Slot>
              <Slot $ml={3}>Knit</Slot>
              <Caret $ml={8} />
              <Slot $ml={10}><GearDim /></Slot>
              <Caret $ml={6} />
              <Slot $pushRight><ChunkAdd /></Slot>
              <Caret $ml={5} />
              <Sep $ml={5} />
              <Slot $ml={7}><ArrowGhost /></Slot>
              <Slot $ml={10}><ArrowGhost down /></Slot>
              <Sep $ml={8} />
              <Slot $ml={5}><RunArrow /></Slot>
              <Slot $ml={2}>Run</Slot>
              <Caret $ml={6} />
              <Sep $ml={6} />
              <Slot $ml={5}><SyncIcon /></Slot>
              <Caret $ml={3} />
            </ToolRow>
            <ToolRow $h={19}>
              <SourceButton>Source</SourceButton>
              <Slot $ml={9}>Visual</Slot>
              <Slot $pushRight><OutlineIcon /></Slot>
              <Slot $ml={2}>Outline</Slot>
              <Slot $ml={8} />
            </ToolRow>
            <EditorBody>
              <EditorMain>
                <OutputRow>
                  <Gutter />
                  <OutputBody>
                    <ChunkLog>
                      □[38;5;232m`stat_bin()` using `bins = 30`. Pick better value with `binwidth`.□[39m
                      <br />
                      plot: [7,7]
                      <br />
                      [{'='.repeat(105)}]100%
                      <br />
                      est: 0s
                    </ChunkLog>
                    <PairsPlot />
                  </OutputBody>
                </OutputRow>
                <CodeArea>
                  <CodeRow $h={13}><Gutter /><CodeText /></CodeRow>
                  <CodeRow $h={13.3}><Gutter>310</Gutter><CodeText /></CodeRow>
                  <CodeRow $h={26.6}>
                    <Gutter>311</Gutter>
                    <CodeText>
                      The density graphs indicate that the Total stats of a Pokemon is more as a combination of attack, Special <Squiggle>Atk</Squiggle>, and defense when
                      {'\n'}observed. The correlation coefficient matrix shows that most of the stats are highly correlated with each other.
                    </CodeText>
                  </CodeRow>
                  <CodeRow $h={13.3}><Gutter>312</Gutter><CodeText /></CodeRow>
                  <CodeRow $h={13.3}>
                    <Gutter>313<FoldMark>▾</FoldMark></Gutter>
                    <CodeText $blue>## I visualized Attack vs. Defense in our Pokemon data using a scatter plot.</CodeText>
                  </CodeRow>
                </CodeArea>
              </EditorMain>
              <VScroll>
                <ArrowUp />
                <ScrollThumb />
                <ArrowDown />
              </VScroll>
            </EditorBody>
            <StatusBar>
              <StatusCell $w={49}>522:3</StatusCell>
              <Slot $ml={4}>
                <Svg w={9} h={9}><rect width="9" height="9" rx="1.500" fill="#4aa564" /></Svg>
              </Slot>
              <Slot $ml={4}>Chunk 25</Slot>
              <Slot $ml={5}>⇅</Slot>
              <Slot $pushRight><Sep $ml={0} /></Slot>
              <Slot $ml={6}>R Markdown</Slot>
              <Slot $ml={5}>⇅</Slot>
              <Slot $ml={0} />
            </StatusBar>
          </Pane>
          <ConsoleBar>
            Console
            <PaneControls>
              <RestoreBtn />
              <MaxBtn />
            </PaneControls>
          </ConsoleBar>
        </Column>

        <Column $gap={8}>
          <Pane $h={259}>
            <TabStrip>
              <Tab $w={71} $active $bold>Environment</Tab>
              <Tab $w={49} $bold>History</Tab>
              <Tab $w={70} $bold>Connections</Tab>
              <Tab $w={38} $bold>Tutori</Tab>
              <PaneControls>
                <MinBtn />
                <MaxBtn />
              </PaneControls>
            </TabStrip>
            <ToolRow $h={18} $pl={6}>
              <OpenFolder />
              <Slot $ml={6}><Floppy /></Slot>
              <Sep $ml={6} />
              <Slot $ml={5}><ImportIcon /></Slot>
              <Caret $ml={6} />
              <Sep $ml={6} />
              <Slot $ml={5}><PieIcon /></Slot>
              <Slot $ml={4}>310 MiB</Slot>
              <Caret $ml={5} />
              <Sep $ml={6} />
              <Slot $ml={7}><Broom /></Slot>
              <Slot $pushRight><ListLines /></Slot>
              <Caret $ml={6} />
              <Sep $ml={4} />
              <Slot $ml={5}><GearDim /></Slot>
              <Caret $ml={3} />
            </ToolRow>
            <ToolRow $h={19} $pl={8}>
              R
              <Caret $ml={7} />
              <Sep $ml={6} />
              <Slot $ml={6}><EnvCube /></Slot>
              <Slot $ml={4}>Global Environment</Slot>
              <Caret $ml={5} />
              <SearchBox>
                <Magnifier c="#9aa0a5" />
              </SearchBox>
            </ToolRow>
            <SectionHead>
              Data
              <Svg w={8} h={5}><path d="M4 0l4 5H0z" fill="#cfcfcf" /></Svg>
            </SectionHead>
            <ListWrap>
              <EnvList>
                {ENV_ROWS.map(([name, value, isList], i) => (
                  <EnvRow key={i}>
                    <EnvName>
                      <PlayDot />
                      {name}
                    </EnvName>
                    <EnvValue>{value}</EnvValue>
                    <EnvAction>{isList ? <Magnifier c="#b4b8bc" /> : <TableIcon />}</EnvAction>
                  </EnvRow>
                ))}
              </EnvList>
              <EnvScroll>
                <EnvThumb />
              </EnvScroll>
            </ListWrap>
            <SectionHead>
              Values
              <Svg w={8} h={5}><path d="M4 5l4-5H0z" fill="#888" /></Svg>
            </SectionHead>
          </Pane>

          <Pane $h={342}>
            <TabStrip $h={18}>
              <Tab $w={35} $active $bold>Files</Tab>
              <Tab $w={39} $bold $pl={9}>Plots</Tab>
              <Tab $w={55} $bold>Packages</Tab>
              <Tab $w={37} $bold>Help</Tab>
              <Tab $w={47} $bold $pl={8}>Viewer</Tab>
              <Tab $w={14} $bold>F</Tab>
              <PaneControls>
                <MinBtn />
                <MaxBtn />
              </PaneControls>
            </TabStrip>
            <ToolRow $h={19} $pl={5}>
              <FolderPlus />
              <Sep $ml={4} />
              <Slot $ml={5}><PlusIcon /></Slot>
              <Caret $ml={10} />
              <Sep $ml={3} />
              <Slot $ml={3}><RedX /></Slot>
              <Slot $ml={9}><RenameIcon /></Slot>
              <Sep $ml={5} />
              <Slot $ml={7}><GearBlue /></Slot>
              <Caret $ml={4} />
              <Slot $pushRight><GearDim /></Slot>
            </ToolRow>
            <PathBar>
              <CheckBox $size={9} />
              <PathChevron $red>›</PathChevron>
              <Slot $ml={3}>Home</Slot>
              <PathChevron>›</PathChevron>
              Data Visualization Projectttt
              <PathChevron>›</PathChevron>
              Data work
              <Slot $pushRight><Sep $ml={0} /></Slot>
              <Slot $ml={6}>...</Slot>
              <Slot $ml={6} />
            </PathBar>
            <FileHead>
              <HeadCell />
              <HeadCell />
              <HeadCell>
                <Svg w={7} h={5}><path d="M3.500 0 7 5H0z" fill="#999" /></Svg>
                Name
              </HeadCell>
              <HeadCell>Size</HeadCell>
            </FileHead>
            <UpRow>
              <span />
              <FileIconCell><UpArrowIcon /></FileIconCell>
              <FileName $muted>..</FileName>
            </UpRow>
            {FILES.map(([name, size, icon]) => (
              <FileRow key={name}>
                <FileCheck><CheckBox /></FileCheck>
                <FileIconCell>{icon}</FileIconCell>
                <FileName>{name}</FileName>
                <FileSize>{size}</FileSize>
              </FileRow>
            ))}
          </Pane>
        </Column>
      </Workspace>

      <Taskbar>
        <StartButton><WinLogo /></StartButton>
        <SearchField>
          <SearchGlyph />
          Type here to search
        </SearchField>
        <TaskIcon $w={46}>
          <Svg w={15} h={15}><circle cx="7.500" cy="7.500" r="6" fill="none" stroke="#fff" strokeWidth="2" /></Svg>
        </TaskIcon>
        <TaskIcon $w={46}><TaskView /></TaskIcon>
        <TaskIcon $w={46}><FaEdge size={22} color="#1477cf" /></TaskIcon>
        <TaskIcon $w={46} $open><ExplorerIcon /></TaskIcon>
        <TaskIcon $w={46}><StoreIcon /></TaskIcon>
        <TaskIcon $w={46}><MailIcon /></TaskIcon>
        <TaskIcon $w={46} $active><RLogo s={22} /></TaskIcon>
        <TaskIcon $w={46}><FirefoxIcon /></TaskIcon>
        <Tray>
          <TrayCaret />
          <Slot $ml={10}><TrayMonitor /></Slot>
          <Slot $ml={10}><TrayBattery /></Slot>
          <Slot $ml={6}><TrayWifi /></Slot>
          <Slot $ml={5}><TraySound /></Slot>
          <Clock>
            1:30 AM
            <br />
            7/16/2023
          </Clock>
          <Slot $ml={8}><TrayNotify /></Slot>
        </Tray>
      </Taskbar>
    </Win>
  );
}
